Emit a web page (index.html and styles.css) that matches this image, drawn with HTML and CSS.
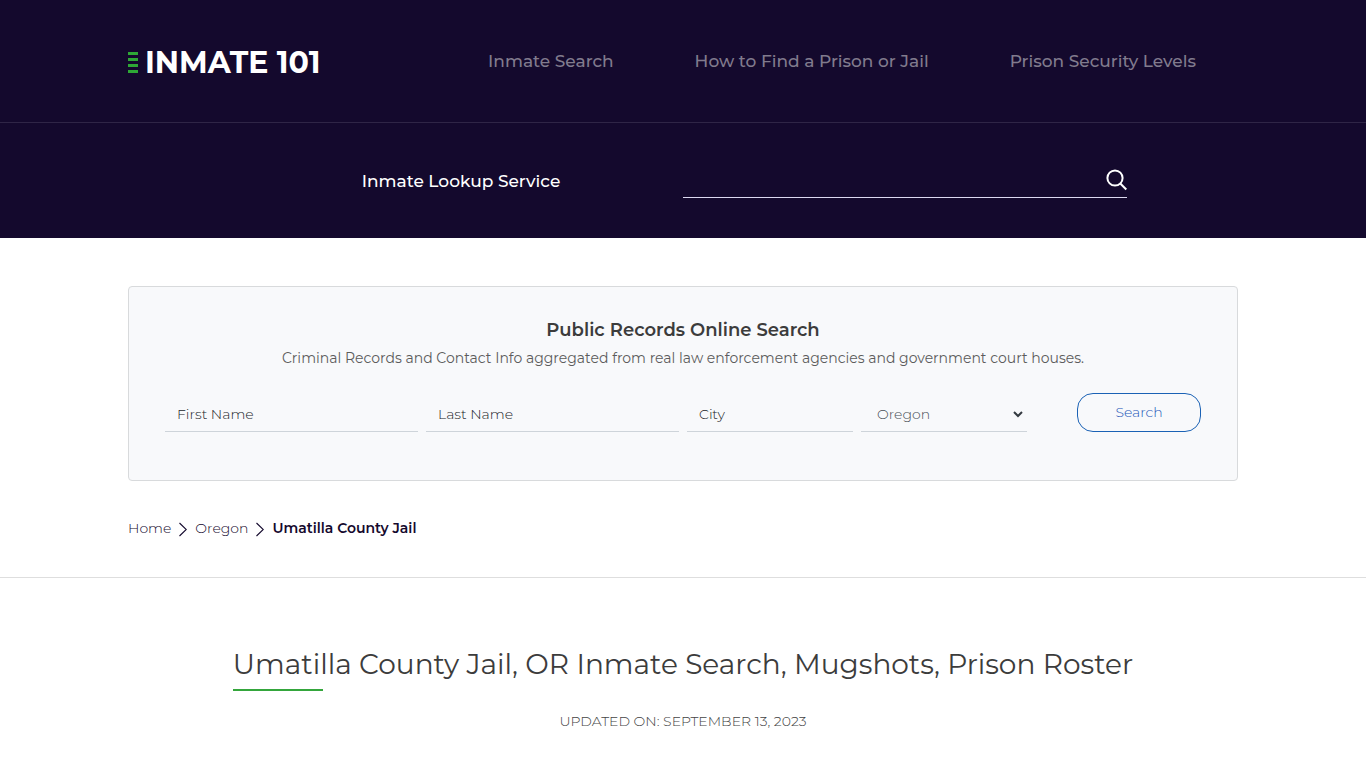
FILE: index.html
```html
<!DOCTYPE html>
<html lang="en">
<head>
<meta charset="utf-8">
<meta name="viewport" content="width=device-width, initial-scale=1">
<title>Umatilla County Jail, OR Inmate Search</title>
<link rel="stylesheet" href="styles.css">
</head>
<body>
<header class="site-header">
  <div class="top-bar">
    <div class="container top-inner">
      <a class="logo" href="#">
        <svg class="logo-mark" width="10" height="22" viewBox="0 0 10 22" aria-hidden="true"><path d="M0 0h10v3H0zM0 6h10v3H0zM0 12h10v3H0zM0 18h10v3H0z" fill="#2ea836"/></svg>
        <span>INMATE 101</span>
      </a>
      <nav class="main-nav" aria-label="Main">
        <a href="#">Inmate Search</a>
        <a href="#">How to Find a Prison or Jail</a>
        <a href="#">Prison Security Levels</a>
      </nav>
    </div>
  </div>
  <form class="container lookup">
    <label class="lookup-label" for="lookup">Inmate Lookup Service</label>
    <div class="lookup-field">
      <input id="lookup" type="text">
      <button type="button" aria-label="Search">
        <svg width="21" height="22" viewBox="0 0 21 22" fill="none" stroke="#fff" stroke-width="2" aria-hidden="true"><circle cx="9" cy="9" r="7.600"/><path d="M14.300 14.500l6 6"/></svg>
      </button>
    </div>
  </form>
</header>
<main>
  <div class="container">
    <section class="records">
      <h2>Public Records Online Search</h2>
      <p>Criminal Records and Contact Info aggregated from real law enforcement agencies and government court houses.</p>
      <form class="records-form">
        <input class="field" type="text" aria-label="First Name" placeholder="First Name">
        <input class="field" type="text" aria-label="Last Name" placeholder="Last Name">
        <input class="field" type="text" aria-label="City" placeholder="City">
        <div class="select-wrap">
          <select class="field" aria-label="State"><option>Oregon</option></select>
          <svg class="caret" width="10" height="7" viewBox="0 0 10 7" fill="none" stroke="#343a40" stroke-width="2" aria-hidden="true"><path d="M1 1l4 4 4-4"/></svg>
        </div>
        <button class="search-btn" type="button">Search</button>
      </form>
    </section>
    <nav class="crumbs" aria-label="Breadcrumb">
      <a href="#">Home</a>
      <svg width="8" height="17" viewBox="0 0 8 17" fill="none" stroke="#14092d" stroke-width="1.100" aria-hidden="true"><path d="M.5 3l6.800 6.500-6.800 6.500"/></svg>
      <a href="#">Oregon</a>
      <svg width="8" height="17" viewBox="0 0 8 17" fill="none" stroke="#14092d" stroke-width="1.100" aria-hidden="true"><path d="M.5 3l6.800 6.500-6.800 6.500"/></svg>
      <strong>Umatilla County Jail</strong>
    </nav>
  </div>
  <article class="intro">
    <h1>Umatilla County Jail, OR Inmate Search, Mugshots, Prison Roster</h1>
    <p>UPDATED ON: SEPTEMBER 13, 2023</p>
  </article>
</main>
</body>
</html>
```
FILE: styles.css
```css
* { box-sizing: border-box; }
body {
  margin: 0;
  background: #fff;
  color: #3c3c3c;
  font-family: Montserrat, Inter, "Open Sans", sans-serif;
  font-size: 14px;
  line-height: 20px;
}
a { color: inherit; text-decoration: none; }
input, select, button { font: inherit; color: inherit; }
.container { width: 100%; max-width: 1110px; margin: 0 auto; }

.site-header { background: #14092d; color: #fff; }
.top-bar { border-bottom: 1px solid #2f2546; }
.top-inner { display: flex; align-items: center; justify-content: space-between; height: 122px; }
.logo { display: flex; align-items: center; gap: 7px; padding-top: 4px; font-size: 30px; line-height: 40px; font-weight: 700; white-space: nowrap; }
.main-nav { display: flex; gap: 81px; padding-right: 42px; font-size: 17px; line-height: 24px; font-weight: 500; color: #817b8d; white-space: nowrap; }

.lookup { display: flex; justify-content: center; align-items: center; height: 115px; }
.lookup-label { width: 40%; text-align: center; font-size: 17px; line-height: 24px; font-weight: 500; }
.lookup-field { display: flex; align-items: center; width: 40%; height: 34px; border-bottom: 1px solid #dcd8f0; }
.lookup-field input { flex: 1; min-width: 0; border: 0; outline: 0; background: none; }
.lookup-field button { display: flex; padding: 0; border: 0; background: none; }

.records { margin-top: 48px; padding: 32px 36px 48px; border: 1px solid #d8dadc; border-radius: 4px; background: #f8f9fb; text-align: center; }
.records h2 { margin: 0; font-size: 18px; line-height: 22px; font-weight: 600; }
.records p { margin: 7px 0 0; font-weight: 400; color: #5c5c5c; }
.records-form { display: grid; grid-template-columns: 253fr 253fr 166fr 166fr 166fr; gap: 8px; margin-top: 25px; }
.field { width: 100%; height: 39px; padding: 4px 12px 0; border: 0; border-bottom: 1px solid #ced4da; border-radius: 0; background: none; outline: 0; font-weight: 300; }
.field::placeholder { color: #212529; opacity: 1; }
.select-wrap { position: relative; }
select.field { appearance: none; padding-left: 16px; color: #495057; }
.caret { position: absolute; right: 4px; top: 18px; pointer-events: none; }
.search-btn { justify-self: end; width: 124px; height: 39px; padding: 0 0 2px; border: 1px solid #1b62b5; border-radius: 16px; background: none; color: #2457b8; font-weight: 300; }

.crumbs { display: flex; align-items: center; gap: 8px; padding: 37px 0 39px; color: #14092d; font-weight: 300; }
.crumbs strong { font-weight: 600; }

.intro { display: flex; flex-direction: column; align-items: center; border-top: 1px solid #dedede; padding: 66px 16px 36px; }
.intro h1 { margin: 0; font-size: 28px; line-height: 40px; font-weight: 400; }
.intro h1::after { content: ""; display: block; width: 90px; height: 2px; margin-top: 5px; background: #34a63c; }
.intro p { margin: 20px 0 0; font-weight: 300; color: #444; }
```
